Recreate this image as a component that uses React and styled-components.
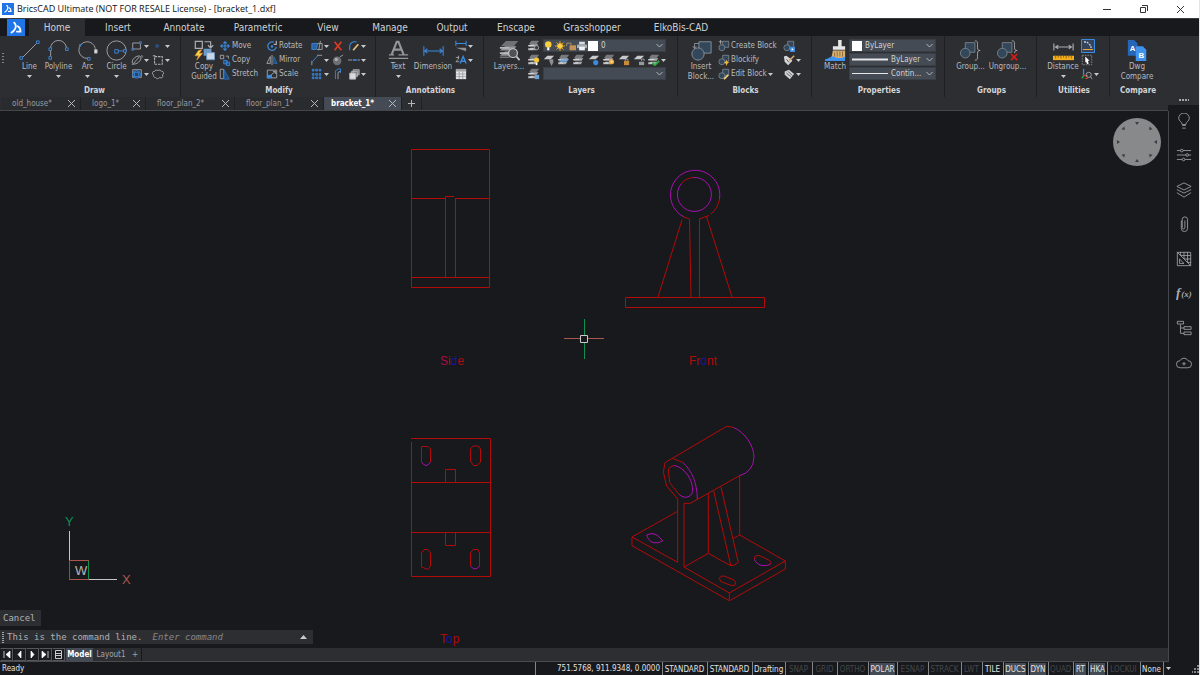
import React from "react";
import styled, { createGlobalStyle } from "styled-components";

const GlobalStyle = createGlobalStyle`
  * {
    box-sizing: border-box;
  }
  body {
    margin: 0;
    background: #17191c;
  }
  button, select, input {
    font: inherit;
    color: inherit;
    background: none;
    border: 0;
    padding: 0;
    margin: 0;
    outline: none;
  }
  svg {
    display: block;
    flex: none;
  }
`;

const StyledApp = styled.div`
  display: flex;
  flex-direction: column;
  height: 100vh;
  overflow: hidden;
  border-right: 1px solid #e4e4e4;
  background: #17191c;
  color: #b8babd;
  font-family: "DejaVu Sans Condensed", "DejaVu Sans", sans-serif;
  font-size: 8px;
  line-height: 10px;
`;

const TitleBar = styled.header`
  display: flex;
  align-items: center;
  height: 18px;
  padding-left: 2px;
  background: #fff;
  color: #111;
  font-family: "Open Sans", "Noto Sans", sans-serif;
  font-size: 9px;
  .title {
    flex: 1;
    margin-left: 3px;
    white-space: nowrap;
  }
  button {
    display: flex;
    align-items: center;
    justify-content: center;
    width: 37px;
    height: 18px;
  }
`;

const MenuBar = styled.nav`
  display: flex;
  height: 18px;
  padding-left: 7px;
  border-top: 1px solid #3a3b3e;
  background: #17191c;
  .logo {
    width: 22px;
  }
`;

const MenuTab = styled.button`
  flex: none;
  width: ${(p) => p.$width}px;
  font-size: 10px;
  line-height: 17px;
  color: #d0d1d3;
  background: ${(p) => (p.$active ? "#2d2e32" : "none")};
`;

const StyledRibbon = styled.div`
  display: flex;
  height: 61px;
  background: #2d2e32;
  .grip {
    width: 7px;
    padding: 17px 0 0 2px;
  }
`;

const StyledPanel = styled.section`
  display: flex;
  flex-direction: column;
  flex: none;
  width: ${(p) => p.$width}px;
  border-right: ${(p) => (p.$last ? "0" : "1px solid #1f2024")};
  .panel-body {
    display: flex;
    height: 48px;
    padding: 3px 0 0 ${(p) => p.$pad}px;
  }
  h2 {
    margin: 0;
    padding-left: 2px;
    font-size: 8px;
    line-height: 13px;
    text-align: center;
    color: #d3d4d6;
  }
`;

const StyledBigTool = styled.button`
  display: flex;
  flex-direction: column;
  align-items: center;
  flex: none;
  width: ${(p) => p.$width}px;
  padding-top: 1px;
  .label {
    margin-top: 1px;
    white-space: pre;
    text-align: center;
  }
  .caret {
    margin-top: 3px;
  }
`;

const ToolColumn = styled.div`
  flex: none;
  width: ${(p) => p.$width}px;
`;

const ToolRow = styled.div`
  display: flex;
  height: 14px;
`;

const StyledSmallTool = styled.button`
  display: flex;
  align-items: center;
  flex: none;
  height: 14px;
  width: ${(p) => (p.$width ? p.$width + "px" : "auto")};
  white-space: nowrap;
  .label {
    padding-left: 1px;
    line-height: 14px;
  }
  .caret {
    margin-left: 1px;
  }
`;

const Field = styled.label`
  display: flex;
  align-items: center;
  width: ${(p) => p.$width}px;
  height: 13px;
  margin-bottom: 1px;
  padding: 0 2px 0 ${(p) => (p.$tight ? 0 : 2)}px;
  gap: ${(p) => (p.$tight ? 1 : 3)}px;
  background: #444b54;
  border: 1px solid #3a3f46;
  color: #d3d4d6;
  select {
    appearance: none;
    flex: 1;
    min-width: 0;
    height: 11px;
    padding-left: ${(p) => (p.$tight ? 2 : 0)}px;
    line-height: 11px;
  }
  .swatch {
    flex: none;
    width: 10px;
    height: 10px;
    background: #fff;
  }
`;

const Work = styled.div`
  display: flex;
  flex: 1;
  min-height: 0;
  background: #2d2e32;
`;

const Stage = styled.div`
  display: flex;
  flex-direction: column;
  flex: 1;
  min-width: 0;
`;

const DocTabs = styled.div`
  display: flex;
  height: 14px;
  padding-left: 1px;
  border-bottom: 1px solid #45464a;
`;

const DocTab = styled.div`
  display: flex;
  align-items: center;
  justify-content: space-between;
  flex: none;
  width: ${(p) => p.$width}px;
  height: 13px;
  padding: 0 4px 0 ${(p) => (p.$active ? 7 : 11)}px;
  border-right: 1px solid #1f2024;
  background: ${(p) => (p.$active ? "#444b54" : "#2a2b2f")};
  color: ${(p) => (p.$active ? "#fff" : "#9a9b9e")};
  font-weight: ${(p) => (p.$active ? "bold" : "normal")};
  line-height: 13px;
`;

const AddTab = styled.button`
  display: flex;
  align-items: center;
  justify-content: center;
  width: 20px;
  border-right: 1px solid #1f2024;
`;

const Canvas = styled.main`
  position: relative;
  flex: 1;
  min-height: 0;
  overflow: hidden;
  background: #17191c;
  .drawing {
    width: 100%;
    height: 100%;
  }
  .look-from {
    position: absolute;
    top: 7px;
    right: 7px;
  }
`;

// floats over the drawing area
const CommandArea = styled.div`
  position: absolute;
  left: 0;
  bottom: 4px;
  display: flex;
  flex-direction: column;
  align-items: flex-start;
  gap: 4px;
  font-family: "DejaVu Sans Mono", "Liberation Mono", monospace;
  font-size: 9px;
  color: #b0b1b4;
  .history {
    height: 16px;
    padding: 0 5px 0 3px;
    line-height: 16px;
    background: #2d2e32;
  }
`;

const CommandLine = styled.label`
  display: flex;
  align-items: center;
  width: 313px;
  height: 14px;
  padding: 0 6px 0 2px;
  gap: 3px;
  background: #2d2e32;
  line-height: 14px;
  white-space: nowrap;
  input {
    flex: 1;
    min-width: 0;
    margin-left: 7px;
  }
  input::placeholder {
    color: #85868a;
    opacity: 1;
    font-style: italic;
  }
`;

const LayoutTabs = styled.div`
  display: flex;
  height: 14px;
  border-bottom: 1px solid #4a4b4e;
  background: #2d2e32;
`;

const NavButton = styled.button`
  display: flex;
  align-items: center;
  justify-content: center;
  width: 13px;
  border: 1px solid #55565a;
  border-left-color: #17191c;
  background: #1c1d20;
`;

const LayoutTab = styled.button`
  width: ${(p) => p.$width}px;
  margin-left: 1px;
  line-height: 13px;
  background: ${(p) => (p.$active ? "#444b54" : "none")};
  color: ${(p) => (p.$active ? "#fff" : "#a4a5a8")};
  font-weight: ${(p) => (p.$active ? "bold" : "normal")};
  border-right: ${(p) => (p.$last ? "1px solid #17191c" : "0")};
`;

const SideBar = styled.aside`
  display: flex;
  flex-direction: column;
  width: 31px;
  background: #17191c;
  .grip {
    height: 8px;
    padding: 2px 0 0 11px;
    background: #2d2e32;
  }
  .side-tools {
    flex: 1;
    margin-top: 6px;
    border-left: 1px solid #45464a;
  }
  .side-list {
    display: flex;
    flex-direction: column;
    justify-content: space-between;
    align-items: center;
    height: 261px;
  }
  button {
    display: flex;
    align-items: center;
    justify-content: center;
    width: 20px;
    height: 20px;
  }
`;

const StatusBar = styled.footer`
  display: flex;
  justify-content: space-between;
  height: 13px;
  background: #17191c;
  color: #e2e2e3;
  line-height: 13px;
  .ready {
    padding-left: 2px;
  }
  .cells {
    display: flex;
  }
  .tail {
    display: flex;
    align-items: center;
    justify-content: space-between;
    width: 36px;
    border-left: 1px solid #85868a;
    padding: 0 0 0 2px;
  }
`;

const StatusCell = styled.button`
  flex: none;
  width: ${(p) => p.$width}px;
  padding: 0 2px 0 1px;
  border-left: 1px solid #85868a;
  line-height: 13px;
  text-align: ${(p) => (p.$coords ? "right" : "center")};
  white-space: nowrap;
  color: ${(p) => (p.$state === "off" ? "#46474b" : "#e2e2e3")};
  span {
    display: block;
    height: 12px;
    line-height: 13px;
    background: ${(p) => (p.$state === "on" ? "#444b54" : "none")};
  }
`;

const GREY = "#a9acb0";
const BLUE = "#3b8be0";
const NAVY = "#33475a";

// icons on a 24 x 24 grid, used above a label
const bigIcons = {
  line: (
    <g fill="none" stroke={GREY}>
      <path d="M4 20 21 3" />
      <path stroke={BLUE} fill="#2d2e32" d="M1 19h3v3H1zM20 1h3v3h-3z" />
    </g>
  ),
  polyline: (
    <g fill="none" stroke={GREY}>
      <path d="M3 19V10a9 9 0 0 1 18-1" />
      <path stroke={BLUE} fill="#2d2e32" d="M1 19h3v3H1zM1 9h3v3H1zM20 9h3v3h-3z" />
    </g>
  ),
  arc: (
    <g fill="none" stroke={GREY}>
      <path d="M12 21A9.500 9.500 0 1 1 21 10" />
      <path fill="#e0e1e2" d="M20 11h3v4h-3z" />
      <path stroke={BLUE} d="M12 20h3v3h-3zM3 5h1v2H3z" />
    </g>
  ),
  circle: (
    <g fill="none" stroke={GREY}>
      <circle cx="12" cy="12" r="11" />
      <path stroke={BLUE} d="M13 12.500h8" />
      <path stroke={BLUE} fill="#2d2e32" d="M10 11h4v4h-4zM20 11h3v3h-3z" />
    </g>
  ),
  copyGuided: (
    <g fill="none" stroke={GREY}>
      <path strokeWidth="1.400" d="M1.500 1.500h8v8h-8zM12 2h7v6M16 6l3 3 3-3" />
      <path fill="#6d9bc8" stroke="none" d="M11 10h9v8h-9z" />
      <path fill="#c9d6e4" stroke="#6d9bc8" d="M14.500 14.500h9v8h-9z" />
      <path fill="#f5d64a" stroke="#e87b28" strokeWidth=".7" d="M5 12 1 18h4l-2 5 7-8H6l3-4z" />
    </g>
  ),
  text: (
    <g fill="none" stroke="#94979a">
      <path strokeWidth="2.400" d="M4 17 10 2h2l6 15M7 11h8" />
      <path strokeWidth="1.500" d="M1 17h6M12 17h11M1 21h22" />
    </g>
  ),
  dimension: (
    <g fill="none" stroke={BLUE} strokeWidth="1.200">
      <path d="M1 7v11M23 7v11M1 12.500h22M5 10l-3 2.500L5 15M19 10l3 2.500-3 2.500" />
    </g>
  ),
  layers: (
    <g>
      <path fill="#6e7175" d="M8 1h14l-5 6H2z" />
      <path fill="#93979b" d="M7 7h13l-4 5H1zM7 13h11l-4 5H1z" />
      <path fill="#b5b7b9" d="M1 8h11v2H1zM1 14h10v2H1zM1 19h11v1H1z" />
      <circle cx="16" cy="15" r="5" fill="#4e5256" stroke="#c5c7c9" strokeWidth="1.400" />
      <path stroke="#c5c7c9" strokeWidth="2" d="m20 19 3.500 4" />
    </g>
  ),
  insertBlock: (
    <g fill={NAVY} stroke="#8d959d">
      <path d="M9 2h14v13H9z" />
      <circle cx="8" cy="16" r="7" />
      <path fill="none" d="M9 4H4v5M2 7l2 3 2-3" />
    </g>
  ),
  match: (
    <g>
      <path fill="#e6e6e6" d="M15 0h4v7h4v4H9V7h6z" />
      <path fill="#d7b070" d="M9 12h14v8l-3 2H7z" />
      <path stroke="#8c6c38" d="M11 14v5M14 13v6M17 13v6M20 13v6" />
      <path fill="#3f93ee" d="M0 22c6-1 6-4 10-3 5 2 8 2 13 0v5H0z" />
    </g>
  ),
  group: (
    <g fill={NAVY} stroke="#7d858d">
      <path d="M6 3h11v11H6z" />
      <circle cx="6" cy="15" r="5.500" />
      <path fill="none" stroke={GREY} d="M17 1c3 0 3 1 3 4v4c0 2 1 3 3 3-2 0-3 1-3 3v4c0 3 0 4-3 4" />
    </g>
  ),
  ungroup: (
    <g fill={NAVY} stroke="#7d858d">
      <path d="M6 3h11v11H6z" />
      <circle cx="6" cy="15" r="5.500" />
      <path fill="none" stroke={GREY} d="M17 1c3 0 3 1 3 4v4c0 2 1 3 3 3-2 0-3 1-3 3" />
      <path stroke="#d81e12" strokeWidth="2" d="m16 16 7 7M23 16l-7 7" />
    </g>
  ),
  distance: (
    <g>
      <path fill="none" stroke={GREY} strokeWidth="1.300" d="M1 4v8M23 4v8M2 8h20M6 6 3 8l3 2M18 6l3 2-3 2" />
      <path fill="#f2ae1c" d="M0 18h24v5H0z" />
      <path stroke="#8b5d0a" d="M3 18v3M6 18v2M9 18v3M12 18v2M15 18v3M18 18v2M21 18v3" />
    </g>
  ),
  compare: (
    <g fontFamily="Liberation Sans, sans-serif" fontWeight="bold" fontSize="9" fill="#fff">
      <path fill="#2566b8" d="M1 0h7l4 4v14H1z" />
      <text x="3" y="12">A</text>
      <path fill="#3f93ee" d="M10 7h8l4 4v13H10z" />
      <text x="13" y="20">B</text>
    </g>
  ),
};

// little stack of sheets that most of the layer commands share
const Stack = () => (
  <g>
    <path fill="#77797d" d="M4 1h9l-3 4H1z" />
    <path fill="#a9abae" d="M3 5h9l-2 3H0zM3 9h8l-2 3H0z" />
    <path fill="#e0e1e2" d="M0 6h7v1H0zM0 10h6v1H0z" />
  </g>
);
const Sheet = () => <path fill="#c6c8ca" d="M5 2h8l-4 4H1z" />;
const Block = () => (
  <g fill={NAVY} stroke="#7d858d">
    <path d="M5.500 1.500h7v7h-7z" />
    <circle cx="4.500" cy="9" r="3.500" />
  </g>
);

// icons on a 14 x 14 grid
const smallIcons = {
  rect: (
    <g fill="none" stroke={GREY}>
      <path d="M2 3.500h9v7H2z" />
      <path stroke={BLUE} fill="#2d2e32" d="M10 2h2v2h-2zM1 10h2v2H1z" />
    </g>
  ),
  point: <circle cx="6" cy="7" r="1.500" fill="none" stroke="#2d6fb8" />,
  ellipse: (
    <g fill="none" stroke={GREY}>
      <ellipse cx="6.500" cy="7" rx="6" ry="3.500" transform="rotate(-40 6.500 7)" />
      <path d="M3 11 10 3M12 2h1v2M1 12h2" />
    </g>
  ),
  boundary: <path fill="none" stroke={GREY} strokeWidth="1.300" strokeDasharray="3 1" d="M3 3h9v9H3zM1 2h3" />,
  region: (
    <g fill="none" stroke={GREY}>
      <path d="M2 2h10v9H2z" />
      <circle cx="6.500" cy="7.500" r="4.500" stroke={BLUE} fill="#21436a" />
      <path stroke={BLUE} d="M4 5h5v5H4z" />
    </g>
  ),
  cloud: (
    <path
      fill="none"
      stroke={GREY}
      d="M4 11a2 2 0 0 1-2-3 2 2 0 0 1 1-4 2.500 2.500 0 0 1 4-1 2.500 2.500 0 0 1 4 1 2 2 0 0 1 1 4 2 2 0 0 1-3 3 3 3 0 0 1-5 0z"
    />
  ),
  move: <path fill="none" stroke={BLUE} strokeWidth="1.200" d="M7 2v10M2 7h10M5 4l2-2 2 2M5 10l2 2 2-2M4 5 2 7l2 2M10 5l2 2-2 2" />,
  copy: (
    <g fill="none" stroke={GREY}>
      <path d="M1.500 1.500h4v4h-4zM8 2.500h3v3" />
      <path stroke={BLUE} fill="#254c78" d="M5.500 7.500h4v4h-4zM8.500 9.500h4v4h-4z" />
    </g>
  ),
  stretch: (
    <g fill="none" stroke={GREY}>
      <path d="M1.500 1.500h4v11h-4z" />
      <path stroke="#2d6fb8" fill="#1e4b80" d="M6 2v11h6z" />
    </g>
  ),
  rotate: (
    <g fill="none" stroke={BLUE} strokeWidth="1.400">
      <path d="M9 2.500A5 5 0 1 0 12 8" />
      <path stroke={GREY} d="M12 1v4H9" />
      <circle cx="7" cy="7.500" r=".8" fill={BLUE} />
    </g>
  ),
  mirror: (
    <g fill="none" stroke={GREY}>
      <path d="M5 3v8H1zM7 1v12" />
      <path stroke="#2d6fb8" fill="#1e4b80" d="M9 3v8h4z" />
    </g>
  ),
  scale: (
    <g fill="none" stroke={GREY}>
      <path d="M1.500 2.500h11v9h-11z" />
      <path stroke="none" fill={BLUE} d="M1 8h6v4H1z" />
      <path d="m6 8 5-4M8 4h3v3" />
    </g>
  ),
  trim: (
    <g fill="none" stroke={GREY}>
      <path fill="#2b62a3" stroke={BLUE} d="M1 4h7l-2 7H1z" />
      <path d="M8 4h5v7H7M9 12l2-11" />
    </g>
  ),
  erase: <path stroke="#dd3a22" strokeWidth="2" d="m3 2 8 10M11 2 3 12" />,
  edit: (
    <g fill="none" stroke={BLUE} strokeWidth="1.300">
      <path d="M2 12V7a6 6 0 0 1 6-5h2" />
      <path stroke="#e6c17c" strokeWidth="2" d="m6 12 6-7" />
    </g>
  ),
  fillet: (
    <g fill="none" stroke={GREY}>
      <path d="M1 13V8M7 1.500h6" />
      <path stroke={BLUE} d="M1.500 9 8 2" />
    </g>
  ),
  explode: (
    <g>
      <circle cx="6" cy="8" r="5" fill="#6c6e71" />
      <circle cx="5" cy="6.500" r="2" fill="#a9abae" />
      <path stroke={GREY} fill="none" d="M9 4c1-2 2-1 4-3" />
    </g>
  ),
  join: (
    <g>
      <path stroke={GREY} d="M0 7h5M11 7h3" />
      <path stroke={BLUE} strokeWidth="2" d="M6 7h4" />
    </g>
  ),
  array: <path fill="#1e4b80" stroke={BLUE} d="M1.500 1.500h2v2h-2zM5.500 1.500h2v2h-2zM9.500 1.500h2v2h-2zM1.500 6.500h2v2h-2zM5.500 6.500h2v2h-2zM9.500 6.500h2v2h-2zM1.500 10.500h2v2h-2zM5.500 10.500h2v2h-2zM9.500 10.500h2v2h-2z" />,
  offset: (
    <g fill="none" stroke={GREY}>
      <path d="M7 13V6q0-2 3-2" />
      <path stroke={BLUE} d="M4 13V5q0-4 6-4v5" />
    </g>
  ),
  order: (
    <g fill="#75777a" stroke="#b4b7bb">
      <path d="M6 2h7v6H6zM4 4h7v6H4z" />
      <path fill="#d9dadb" d="M2 6h7v7H2z" />
    </g>
  ),
  dimStyle: (
    <g fill="none" stroke={BLUE} strokeWidth="1.200">
      <path d="M1 1v6M13 1v6M1 4h12" />
      <path fill="#8d9094" stroke="none" d="M1 9h12v4z" />
    </g>
  ),
  textStyle: (
    <g fill="none" stroke={BLUE} strokeWidth="1.600">
      <path d="m6 11 3.500-8L13 11M7 8.500h5" />
      <path stroke={GREY} strokeWidth="1" d="M1 4h4M4 2v4L1 9h4" />
    </g>
  ),
  table: (
    <g>
      <path fill="#e3e4e5" d="M1 2h12v11H1z" />
      <path fill="#a2a4a7" d="M1 1h12v3H1z" />
      <path stroke="#85878a" strokeWidth=".7" d="M1 7h12M1 10h12M5 4v9M9 4v9" />
    </g>
  ),
  layerFind: (
    <g>
      <Stack />
      <circle cx="10" cy="9" r="2.500" fill="#3a3c40" stroke={GREY} />
    </g>
  ),
  layerOn: (
    <g>
      <Stack />
      <circle cx="10" cy="7" r="3" fill="#f6c637" />
      <path fill="#fff" d="M9 10h2v3H9z" />
    </g>
  ),
  layerOff: (
    <g>
      <Sheet />
      <path fill="#8c8e91" d="M7 6h5v4l-2 4-2-4z" />
    </g>
  ),
  layerIso: (
    <g>
      <Stack />
      <path fill="#72a7dc" d="M4 6h9l-3 3H1z" />
    </g>
  ),
  layerStack: <Stack />,
  layerFreeze: (
    <g>
      <Sheet />
      <circle cx="9" cy="10" r="3" fill={BLUE} />
    </g>
  ),
  layerThaw: (
    <g>
      <Stack />
      <circle cx="10" cy="9" r="3" fill="#f0a53a" />
      <circle cx="10" cy="9" r="1.300" fill="#ffe9a8" />
    </g>
  ),
  layerLock: (
    <g>
      <Sheet />
      <path fill="#c98a3a" d="M7 8h6v5H7z" />
      <path fill="none" stroke="#aaa" d="M8.500 8V6h3v2" />
    </g>
  ),
  layerUnlock: (
    <g>
      <Sheet />
      <path fill="#96989b" d="M7 9h6v4H7z" />
      <path fill="none" stroke="#aaa" d="M10 8V6h3v2" />
    </g>
  ),
  layerCheck: (
    <g>
      <Stack />
      <path fill="none" stroke="#2db23a" strokeWidth="2" d="m5 10 3 3 5-5" />
    </g>
  ),
  layerState: (
    <g>
      <Stack />
      <path fill="#6fa0d4" d="M8 8h5v5H8z" />
    </g>
  ),
  bulb: (
    <g>
      <circle cx="6" cy="5" r="4.500" fill="#f9cf3c" />
      <path fill="#fff" d="M4.500 9h3v4h-3z" />
    </g>
  ),
  sun: (
    <g stroke="#f2b21f" strokeWidth="1.200">
      <path d="M7 0v14M0 7h14M2 2l10 10M12 2 2 12" />
      <circle cx="7" cy="7" r="3.500" fill="#fbd34a" />
    </g>
  ),
  padlock: (
    <g>
      <path fill="#c79355" d="M5 6h9v7H5z" />
      <path fill="none" stroke="#b0946f" strokeWidth="1.300" d="M1 7V3h6v3M9 8v4" />
    </g>
  ),
  printer: (
    <g>
      <path fill="#d9dde0" d="M3 1h8v4H3z" />
      <path fill="#a5adb6" d="M0 5h14v5H0z" />
      <path fill="#f1f2f3" d="M3 8h8v5H3z" />
    </g>
  ),
  createBlock: (
    <g>
      <Block />
      <path fill="none" stroke={GREY} d="M1 2h4M3 0v5" />
    </g>
  ),
  blockify: (
    <g>
      <Block />
      <path fill="#f6b73c" d="m10 7 1 2 2 1-2 1-1 3-1-3-2-1 2-1z" />
    </g>
  ),
  editBlock: (
    <g>
      <Block />
      <path stroke="#f0cf78" strokeWidth="2" d="m7 13 5-5" />
    </g>
  ),
  blockSave: (
    <g>
      <Block />
      <path fill={BLUE} d="M8 8h6v6H8z" />
      <path fill="#fff" d="M10 10h2v2h-2z" />
    </g>
  ),
  attEdit: (
    <g>
      <path fill="#d5d6d8" d="m1 3 3-1 4 3 3 3-5 5-4-4z" />
      <path stroke="#d9a66c" strokeWidth="1.800" d="m7 8 6-6" />
      <path stroke="#55585c" d="m4 6 3 4" />
    </g>
  ),
  attTag: (
    <g>
      <path fill="#cfd0d2" d="m2 4 5-2 6 5-5 6-6-5z" />
      <path stroke="#55585c" d="m4 6 5 4M6 4l5 5" />
    </g>
  ),
  snap: (
    <g>
      <path fill="#34445c" stroke={BLUE} d="M.5.500h13v13H.5z" />
      <path fill="none" stroke="#d0d2d4" strokeWidth="1.300" strokeDasharray="2 1" d="M3 3h3l4 4v2" />
      <path fill="#f0a53a" d="M2 10h10v1H2z" />
    </g>
  ),
  select: (
    <g>
      <path fill="none" stroke="#85878a" strokeDasharray="2 1" d="M1.500 1.500h11v11h-11z" />
      <path fill="#fff" d="m5 3 5 5H8l1 3-2 1-1-3-1 1z" />
    </g>
  ),
  ucs: (
    <g fill="none">
      <path stroke={BLUE} strokeWidth="1.500" d="M3 9V1" />
      <path stroke="#2db23a" strokeWidth="1.500" d="m3 9-2 3" />
      <path stroke="#d33a22" strokeWidth="1.500" d="M3 9h5M5 12h3" />
      <circle cx="9" cy="8" r="3" stroke={GREY} />
      <path stroke={GREY} d="m11 10 2 3" />
    </g>
  ),
};

const Icon = ({ name, size = 12 }) => (
  <svg width={size} height={size} viewBox="0 0 14 14" aria-hidden="true">
    {smallIcons[name]}
  </svg>
);

const Caret = () => (
  <svg className="caret" width="5" height="3" viewBox="0 0 5 3" aria-hidden="true">
    <path fill="#c9cacc" d="M0 0h5L2.500 3z" />
  </svg>
);

const Chevron = () => (
  <svg width="7" height="5" viewBox="0 0 7 5" aria-hidden="true">
    <path fill="none" stroke="#b4b7bb" d="m.5 1 3 3 3-3" />
  </svg>
);

const Cross = () => (
  <svg width="9" height="9" viewBox="0 0 9 9" aria-hidden="true">
    <path stroke="#b4b7bb" d="m1 1 7 7M8 1 1 8" />
  </svg>
);

const Logo = ({ size }) => (
  <svg width={size} height={size} viewBox="0 0 20 20" aria-hidden="true">
    <path fill="#1f74e8" d="M0 0h20v20H0z" />
    <path fill="none" stroke="#fff" strokeWidth="2" strokeLinecap="round" d="M8 4c2 2 2 5 1 7-1 2-2 3-4 4M12 8c2 1 3 3 3 6h-4" />
  </svg>
);

const BigTool = ({ icon, label, width, caret }) => (
  <StyledBigTool $width={width}>
    <svg width="21" height="21" viewBox="0 0 24 24" aria-hidden="true">
      {bigIcons[icon]}
    </svg>
    <span className="label">{label}</span>
    {caret && <Caret />}
  </StyledBigTool>
);

const SmallTool = ({ icon, label, caret, width, size }) => (
  <StyledSmallTool $width={width} aria-label={label || icon}>
    <Icon name={icon} size={size} />
    {label && <span className="label">{label}</span>}
    {caret && <Caret />}
  </StyledSmallTool>
);

// each tool is [icon, label, has a drop-down, icon size]
const Column = ({ width, tools }) => (
  <ToolColumn $width={width}>
    {tools.map(([icon, label, caret, size]) => (
      <SmallTool key={icon} icon={icon} label={label} caret={caret} size={size} />
    ))}
  </ToolColumn>
);

const Panel = ({ title, width, pad, last, children }) => (
  <StyledPanel $width={width} $pad={pad} $last={last}>
    <div className="panel-body">{children}</div>
    <h2>{title}</h2>
  </StyledPanel>
);

const Combo = ({ label, value, width, tight, children }) => (
  <Field $width={width} $tight={tight}>
    {children}
    <select aria-label={label} defaultValue={value}>
      <option>{value}</option>
    </select>
    <Chevron />
  </Field>
);

const LineSample = ({ weight }) => (
  <svg width="36" height="5" viewBox="0 0 36 5" aria-hidden="true">
    <path stroke="#e6e6e7" strokeWidth={weight} d="M0 2.500h36" />
  </svg>
);

const Ribbon = () => (
  <StyledRibbon>
    <div className="grip">
      <svg width="3" height="10" viewBox="0 0 3 10" aria-hidden="true">
        <path stroke="#85868a" strokeWidth="2" strokeDasharray="1 2" d="M1 0v10" />
      </svg>
    </div>
    <Panel title="Draw" width={174} pad={8}>
      <BigTool icon="line" label="Line" width={29} caret />
      <BigTool icon="polyline" label="Polyline" width={29} caret />
      <BigTool icon="arc" label="Arc" width={29} caret />
      <BigTool icon="circle" label="Circle" width={29} caret />
      <Column width={21} tools={[["rect", "", true], ["ellipse", "", true], ["region", "", true]]} />
      <Column width={21} tools={[["point", "", true], ["boundary", "", true], ["cloud"]]} />
    </Panel>
    <Panel title="Modify" width={195} pad={8}>
      <BigTool icon="copyGuided" label={"Copy\nGuided"} width={30} />
      <Column width={47} tools={[["move", "Move"], ["copy", "Copy"], ["stretch", "Stretch"]]} />
      <Column width={45} tools={[["rotate", "Rotate"], ["mirror", "Mirror"], ["scale", "Scale"]]} />
      <Column width={21} tools={[["trim", "", true], ["fillet", "", true], ["array", "", true]]} />
      <Column width={16} tools={[["erase"], ["explode"], ["offset"]]} />
      <Column width={21} tools={[["edit", "", true], ["join", "", true], ["order", "", true]]} />
    </Panel>
    <Panel title="Annotations" width={108} pad={9}>
      <BigTool icon="text" label="Text" width={26} caret />
      <BigTool icon="dimension" label="Dimension" width={44} />
      <Column width={21} tools={[["dimStyle", "", true], ["textStyle", "", true], ["table"]]} />
    </Panel>
    <Panel title="Layers" width={194} pad={6}>
      <BigTool icon="layers" label="Layers..." width={38} />
      <ToolColumn $width={138}>
        <ToolRow>
          <SmallTool icon="layerFind" width={15} />
          <Combo label="Current layer" value="0" width={123} tight>
            <Icon name="bulb" size={10} />
            <Icon name="sun" size={10} />
            <Icon name="padlock" size={10} />
            <Icon name="printer" size={10} />
            <span className="swatch" />
          </Combo>
        </ToolRow>
        <ToolRow>
          {["layerOn", "layerOff", "layerIso", "layerStack", "layerFreeze", "layerThaw", "layerLock", "layerUnlock"].map((icon) => (
            <SmallTool key={icon} icon={icon} width={15} />
          ))}
          <SmallTool icon="layerCheck" caret />
        </ToolRow>
        <ToolRow>
          <SmallTool icon="layerState" width={15} />
          <Combo label="Layer state" value="" width={123} />
        </ToolRow>
      </ToolColumn>
    </Panel>
    <Panel title="Blocks" width={134} pad={6}>
      <BigTool icon="insertBlock" label={"Insert\nBlock..."} width={34} />
      <Column width={65} tools={[["createBlock", "Create Block"], ["blockify", "Blockify"], ["editBlock", "Edit Block", true]]} />
      <Column width={21} tools={[["blockSave"], ["attEdit", "", true], ["attTag", "", true]]} />
    </Panel>
    <Panel title="Properties" width={133} pad={9}>
      <BigTool icon="match" label="Match" width={28} />
      <ToolColumn $width={87}>
        <Combo label="Color" value="ByLayer" width={87}>
          <span className="swatch" />
        </Combo>
        <Combo label="Lineweight" value="ByLayer" width={87}>
          <LineSample weight={2} />
        </Combo>
        <Combo label="Linetype" value="Contin..." width={87}>
          <LineSample weight={1} />
        </Combo>
      </ToolColumn>
    </Panel>
    <Panel title="Groups" width={92} pad={7}>
      <BigTool icon="group" label="Group..." width={37} />
      <BigTool icon="ungroup" label="Ungroup..." width={37} />
    </Panel>
    <Panel title="Utilities" width={73} pad={8}>
      <BigTool icon="distance" label="Distance" width={36} caret />
      <Column width={21} tools={[["snap", "", false, 14], ["select"], ["ucs", "", true]]} />
    </Panel>
    <Panel title="Compare" width={54} pad={7} last>
      <BigTool icon="compare" label={"Dwg\nCompare"} width={40} />
    </Panel>
  </StyledRibbon>
);

const RED = "#b40a0a";
const MAGENTA = "#a810b0";
const GREEN = "#0e9150";
const BROWN = "#ac554b";

const Drawing = () => (
  <svg className="drawing" fill="none" stroke={RED} role="img" aria-label="bracket_1 views">
    <g transform="translate(0 -111)">
      {/* side */}
      <path d="M411.500 149.500H489.500V287.500H411.500V149.500" />
      <path d="M411 198.500H446M455 198.500H490M445.500 277.500V196.500H454M455.500 198V277.500M411 277.500H490" />
      {/* front */}
      <path stroke={MAGENTA} d="M719.500 199A24.700 24.700 0 1 0 684 217M693 177.500A17 17 0 1 1 681 184" />
      <path d="M681 184A17 17 0 0 1 693 177.500M719.500 199A24.700 24.700 0 0 1 711 214M709 215.500L699.500 219V297M684 217L689.500 219L691 297" />
      <path d="M682 220L658 297M706.500 216.500L732 297M625.500 297.500H764.500V307.500H625.500Z" />
      {/* top */}
      <path d="M411 438.500H490.500V576.500H411.500V442M411 482.500H490M411 532.500H490" />
      <path d="M445.500 482V469.500H455.500V482M445.500 532V545.500H455.500V532" />
      <path d="M421.500 462V446.500H428L430.500 449V462M470.500 461V449L473 446H478L480.500 449V462L477 465.500H473.500L470.500 461" />
      <path d="M421.500 567V553L424 549.500H428L430.500 553V566L428 569.500L421.500 567M470.500 566V553L473 549.500H478L479.500 553V566" />
      <path stroke={MAGENTA} d="M421.500 462Q426 469 430.500 462M470.500 566Q475 572 479.500 566" />
      {/* isometric */}
      <g transform="translate(610 415) scale(.3333)" strokeWidth="3">
        <path d="M203 289 66 366 203 442M66 366V392L356 556H361L526 462V438L389 360 370 371" />
        <path d="M222 456 358 534 526 438M358 534V556M222 456 295 415 360 451 370 452 385 442 333 216M311 228 362 450" />
        <path d="M389 182V360M295 235V415M222 456V265H241L389 182M203 442V252L170 213 160 172 165 143 187 130 350 34 370 37" />
        <path d="M187 130 218 142M192 151 178 158 175 165 179 203 207 238" />
        <path d="M433 433 435 424 447 421 478 436 483 442 481 448M328 490 333 484 342 483 372 495 377 503 374 511 362 511 333 500Z" />
        <path
          stroke={MAGENTA}
          d="M370 37C405 52 432 92 432 127Q430 170 389 182M218 142C245 165 262 205 262 252M192 151C225 158 250 195 248 230Q243 246 226 247 215 246 207 238M433 433Q440 450 460 452 472 452 481 448M158 378 147 365Q130 350 110 360 115 378 130 383 145 386 158 378"
        />
      </g>
      <g stroke="none" fill="#b00c0c" fontFamily="Liberation Sans, sans-serif" fontSize="12">
        <text x="440" y="365">
          <tspan fill="#a80c4a">S</tspan>i<tspan fill="#1414b0">d</tspan>e
        </text>
        <text x="689" y="365">
          Fr<tspan fill="#1414b0">o</tspan>nt
        </text>
        <text x="440" y="643">
          T<tspan fill="#1414b0">o</tspan>p
        </text>
      </g>
      {/* cursor */}
      <path stroke={BROWN} d="M564 338.500H604" />
      <path stroke={GREEN} d="M584.500 319V359" />
      <path stroke="#c9cacc" fill="#17191c" d="M580.500 335.500h7v7h-7z" />
      {/* ucs */}
      <path stroke="#c4c5c7" d="M69.500 531V560M89 579.500H117" />
      <path stroke={GREEN} d="M69.500 560V579M88.500 560V579" />
      <path stroke={BROWN} d="M69 560.500H89M69 579.500H89" />
      <g stroke="none" fontFamily="Liberation Sans, sans-serif" fontSize="13">
        <text x="65" y="526" fill={GREEN}>Y</text>
        <text x="122" y="584" fill={BROWN}>X</text>
        <text x="75" y="575" fill="#b4b7bb">W</text>
      </g>
    </g>
  </svg>
);

const LookFrom = () => (
  <svg className="look-from" width="48" height="48" viewBox="-24 -24 48 48" aria-hidden="true">
    <circle r="24" fill="#88898b" />
    {[0, 45, 90, 135, 180, 225, 270, 315].map((angle) => (
      <path key={angle} fill="#3c3d40" transform={`rotate(${angle})`} d="M-2-20h4l-2 3z" />
    ))}
  </svg>
);

const sideIcons = [
  <path d="M7 14h4M7 17h4M7 13c0-3-4-4-4-7a6 6 0 0 1 12 0C15 9 11 10 11 13z" />,
  <path d="M1 4h4M8 4h9M1 9h10M14 9h3M1 14h6M10 14h7M5 4a1.500 1.500 0 1 0 3 0 1.500 1.500 0 1 0-3 0M11 9a1.500 1.500 0 1 0 3 0 1.500 1.500 0 1 0-3 0M7 14a1.500 1.500 0 1 0 3 0 1.500 1.500 0 1 0-3 0" />,
  <path d="m9 1 8 4-8 4-8-4zM1 8.500l8 4 8-4M1 12l8 5 8-5" />,
  <path d="M6 5v9a3 3 0 0 0 7 0V4a3 3 0 0 0-6 0v9a1.500 1.500 0 0 0 3 0V5" />,
  <path d="M1.500 1.500h15v15h-15zM1 1l16 16M4 9v5h5zM5 1v4M9 1v8M13 1v12M5 5h12M9 9h8M13 13h4" />,
  <g fontFamily="Liberation Serif, serif" fontStyle="italic" fontWeight="bold" fill="#a9abae" stroke="none">
    <text x="0" y="14" fontSize="15">
      f
    </text>
    <text x="6" y="13" fontSize="10">
      (x)
    </text>
  </g>,
  <path d="M1.500 1.500h7v3h-7zM5 5v10h4M5 9h4M9 7.500h8v3H9zM9 13.500h8v3H9z" />,
  <path d="M4.500 15.500a4 4 0 0 1 0-8 5 5 0 0 1 9 0 4 4 0 0 1 0 8zM9 13V9M7 11h4" />,
];

const sideNames = ["Tips", "Properties", "Layers", "Attachments", "Sheets", "Parameters", "Structure", "Cloud"];

const navPaths = ["M2 1v7M8 1 4 4.500 8 8z", "M6 1 3 4.500 6 8z", "M3 1 6 4.500 3 8z", "M7 1v7M1 1l4 3.500L1 8z"];

const menus = [
  ["Home", 56],
  ["Insert", 66],
  ["Annotate", 66],
  ["Parametric", 82],
  ["View", 58],
  ["Manage", 66],
  ["Output", 58],
  ["Enscape", 70],
  ["Grasshopper", 82],
  ["ElkoBis-CAD", 96],
];

const documents = [
  ["old_house*", 80],
  ["logo_1*", 65],
  ["floor_plan_2*", 89],
  ["floor_plan_1*", 89],
  ["bracket_1*", 78],
];

const statusCells = [
  ["STANDARD", 45],
  ["STANDARD", 45],
  ["Drafting", 33],
  ["SNAP", 27, "off"],
  ["GRID", 25, "off"],
  ["ORTHO", 31, "off"],
  ["POLAR", 29, "on"],
  ["ESNAP", 31, "off"],
  ["STRACK", 33, "off"],
  ["LWT", 21, "off"],
  ["TILE", 21],
  ["DUCS", 25, "on"],
  ["DYN", 20, "on"],
  ["QUAD", 25, "off"],
  ["RT", 15, "on"],
  ["HKA", 19, "on"],
  ["LOCKUI", 33, "off"],
  ["None", 23],
];

const App = () => (
  <StyledApp>
    <GlobalStyle />
    <TitleBar>
      <Logo size={12} />
      <span className="title">BricsCAD Ultimate (NOT FOR RESALE License) - [bracket_1.dxf]</span>
      <button aria-label="Minimize">
        <svg width="9" height="9" stroke="#333">
          <path d="M1 4.500h8" />
        </svg>
      </button>
      <button aria-label="Restore">
        <svg width="9" height="9" fill="none" stroke="#333">
          <path d="M1.500 2.500h5v5h-5zM3 .500h5.500V6" />
        </svg>
      </button>
      <button aria-label="Close">
        <svg width="9" height="9" stroke="#333">
          <path d="m1 1 7 7M8 1 1 8" />
        </svg>
      </button>
    </TitleBar>
    <MenuBar>
      <div className="logo">
        <Logo size={18} />
      </div>
      {menus.map(([name, width], i) => (
        <MenuTab key={name} $width={width} $active={i === 0}>
          {name}
        </MenuTab>
      ))}
    </MenuBar>
    <Ribbon />
    <Work>
      <Stage>
        <DocTabs>
          {documents.map(([name, width]) => (
            <DocTab key={name} $width={width} $active={name === "bracket_1*"}>
              {name}
              <button aria-label={`Close ${name}`}>
                <Cross />
              </button>
            </DocTab>
          ))}
          <AddTab aria-label="New drawing">
            <svg width="7" height="7" stroke="#b4b7bb">
              <path d="M0 3.500h7M3.500 0v7" />
            </svg>
          </AddTab>
        </DocTabs>
        <Canvas>
          <Drawing />
          <LookFrom />
          <CommandArea>
            <div className="history">Cancel</div>
            <CommandLine>
              <svg width="2" height="11">
                <path stroke="#a4a5a8" strokeWidth="2" strokeDasharray="1 1" d="M1 0v11" />
              </svg>
              This is the command line.
              <input placeholder="Enter command" />
              <svg width="7" height="4">
                <path fill="#c9cacc" d="m0 4 3.500-4L7 4z" />
              </svg>
            </CommandLine>
          </CommandArea>
        </Canvas>
        <LayoutTabs>
          {navPaths.map((d) => (
            <NavButton key={d} aria-label="Layout navigation">
              <svg width="9" height="9" fill="#fff" stroke="#fff" strokeWidth=".7">
                <path d={d} />
              </svg>
            </NavButton>
          ))}
          <NavButton aria-label="Layout list">
            <svg width="9" height="9" fill="none" stroke="#c9cacc">
              <path d="M1.500.500h6v8h-6zM1 3.500h7M1 5.500h7" />
            </svg>
          </NavButton>
          <LayoutTab $width={27} $active>
            Model
          </LayoutTab>
          <LayoutTab $width={34}>Layout1</LayoutTab>
          <LayoutTab $width={13} $last>
            +
          </LayoutTab>
        </LayoutTabs>
      </Stage>
      <SideBar>
        <div className="grip">
          <svg width="10" height="2">
            <path stroke="#a4a5a8" strokeWidth="2" strokeDasharray="2 1" d="M0 1h10" />
          </svg>
        </div>
        <div className="side-tools">
          <div className="side-list">
            {sideIcons.map((icon, i) => (
              <button key={sideNames[i]} aria-label={sideNames[i]}>
                <svg width="16" height="16" viewBox="0 0 18 18" fill="none" stroke="#9c9ea1">
                  {icon}
                </svg>
              </button>
            ))}
          </div>
        </div>
      </SideBar>
    </Work>
    <StatusBar>
      <span className="ready">Ready</span>
      <div className="cells">
        <StatusCell $width={127} $coords>
          751.5768, 911.9348, 0.0000
        </StatusCell>
        {statusCells.map(([name, width, state], i) => (
          <StatusCell key={i} $width={width} $state={state}>
            <span>{name}</span>
          </StatusCell>
        ))}
        <div className="tail">
          <Caret />
          <svg width="7" height="9">
            <path fill="#85868a" d="M5 1h2v2H5zM2 4h2v2H2zM5 4h2v2H5zM0 7h1v2H0zM2 7h2v2H2zM5 7h2v2H5z" />
          </svg>
        </div>
      </div>
    </StatusBar>
  </StyledApp>
);

export default App;
